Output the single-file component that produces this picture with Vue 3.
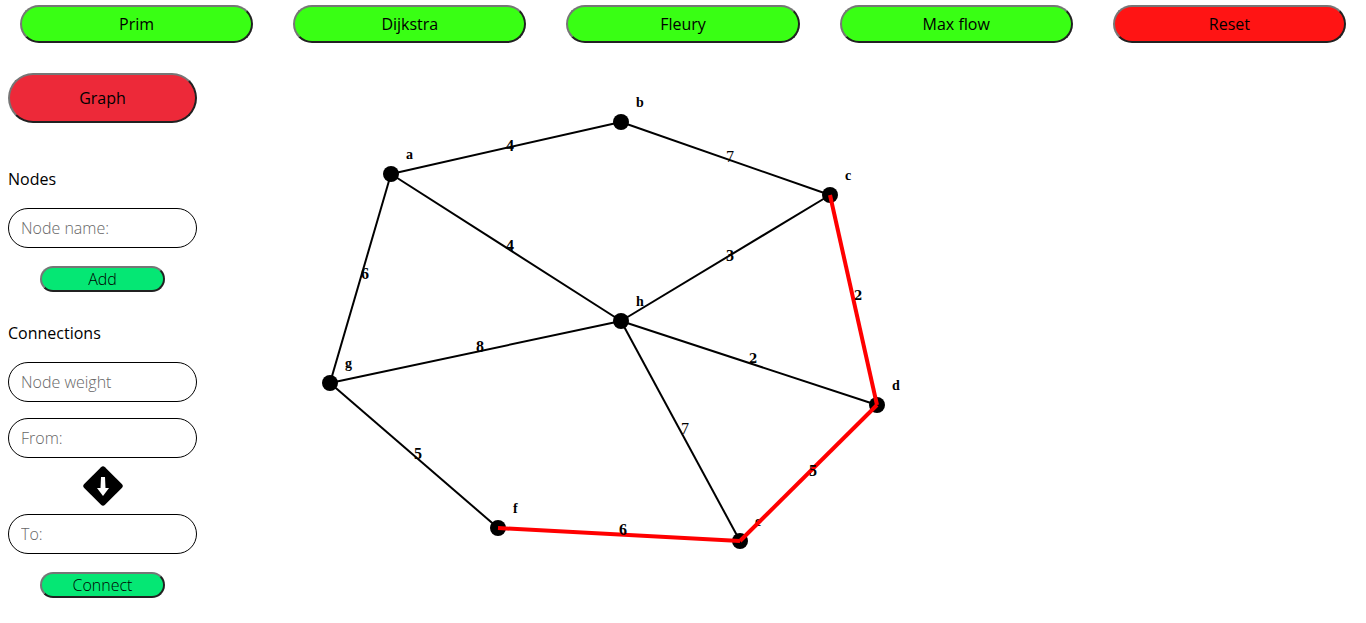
<script setup>
import { ref } from 'vue'

const algorithms = ['Prim', 'Dijkstra', 'Fleury', 'Max flow']
const nodeName = ref('')
const weight = ref('')
const from = ref('')
const to = ref('')

const nodes = {
  a: { x: 186, y: 131 },
  b: { x: 416, y: 79 },
  c: { x: 625, y: 152 },
  d: { x: 672, y: 362 },
  e: { x: 535, y: 498 },
  f: { x: 293, y: 485 },
  g: { x: 125, y: 340 },
  h: { x: 416, y: 278 },
}

const connect = ([start, end, value]) => {
  const p = nodes[start]
  const q = nodes[end]
  return {
    id: start + end,
    p,
    q,
    value,
    x: Math.round((p.x + q.x) / 2),
    y: Math.round((p.y + q.y) / 2) + ([3, 4, 5, 7].includes(value) ? 3 : 0),
  }
}

const edges = [
  ['a', 'b', 4], ['b', 'c', 7], ['a', 'h', 4], ['a', 'g', 6], ['c', 'h', 3],
  ['g', 'h', 8], ['h', 'd', 2], ['h', 'e', 7], ['g', 'f', 5],
].map(connect)

const route = [['c', 'd', 2], ['d', 'e', 5], ['e', 'f', 6]].map(connect)
</script>

<template>
  <div class="page">
    <nav class="toolbar">
      <button v-for="name in algorithms" :key="name" type="button">{{ name }}</button>
      <button type="button" class="reset">Reset</button>
    </nav>
    <main class="workspace">
      <aside class="sidebar">
        <button type="button" class="graph">Graph</button>
        <form class="group" @submit.prevent>
          <label class="heading" for="node-name">Nodes</label>
          <input id="node-name" v-model="nodeName" type="text" placeholder="Node name:">
          <button type="submit" class="submit">Add</button>
        </form>
        <form class="group" @submit.prevent>
          <label class="heading" for="weight">Connections</label>
          <input id="weight" v-model="weight" type="text" placeholder="Node weight">
          <input id="from" v-model="from" class="from" type="text" placeholder="From:" aria-label="From">
          <svg class="arrow" viewBox="0 0 40 40" aria-hidden="true">
            <path d="M18 1.2Q20-.8 22 1.2L38.8 18Q40.8 20 38.8 22L22 38.8Q20 40.8 18 38.8L1.2 22Q-.8 20 1.2 18Z" />
            <path class="arrow-mark" d="M18 11h4l.5 11H26L20 30l-6-8h3.500Z" />
          </svg>
          <input id="to" v-model="to" type="text" placeholder="To:" aria-label="To">
          <button type="submit" class="submit">Connect</button>
        </form>
      </aside>
      <svg class="board" role="img" aria-label="Weighted graph">
        <line v-for="e in edges" :key="e.id" class="edge" :x1="e.p.x" :y1="e.p.y" :x2="e.q.x" :y2="e.q.y" />
        <text v-for="e in edges" :key="e.id" class="weight" :class="{ low: e.value === 2, thin: e.value === 7 }" :x="e.x" :y="e.y">{{ e.value }}</text>
        <g v-for="(n, name) in nodes" :key="name">
          <circle :cx="n.x" :cy="n.y" r="8" />
          <text class="name" :x="n.x + 15" :y="n.y - 15">{{ name }}</text>
        </g>
        <line v-for="e in route" :key="e.id" class="edge route" :x1="e.p.x" :y1="e.p.y" :x2="e.q.x" :y2="e.q.y" />
        <text v-for="e in route" :key="e.id" class="weight" :class="{ low: e.value === 2 }" :x="e.x" :y="e.y">{{ e.value }}</text>
      </svg>
    </main>
  </div>
</template>

<style>
body {
  margin: 0;
  background: #fff;
}
</style>

<style scoped>
.page {
  font: 380 16px/22px "Open Sans", sans-serif;
  color: #000;
}
button,
input {
  box-sizing: border-box;
  margin: 0;
  font: inherit;
  color: #000;
}
button {
  padding: 0;
  border: 2px solid;
  border-color: #767676 #212121 #212121 #767676;
}
.toolbar {
  display: flex;
  gap: 40px;
  padding: 5px 20px 0;
}
.toolbar button {
  flex: 1;
  height: 38px;
  border-radius: 20px;
  background: #39ff14;
}
.toolbar .reset {
  background: #ff1414;
}
.workspace {
  display: flex;
}
.sidebar {
  display: flex;
  flex: none;
  flex-direction: column;
  width: 189px;
  padding: 30px 8px 0;
}
.graph {
  height: 50px;
  margin-bottom: 15px;
  border-radius: 25px;
  background: #ed2939;
}
.group {
  display: flex;
  flex-direction: column;
  margin-top: 30px;
}
.heading {
  margin-bottom: 18px;
}
input {
  width: 100%;
  height: 40px;
  padding: 0 12px;
  border: 1px solid #000;
  border-radius: 20px;
  background: #fff;
  font-weight: 300;
}
input::placeholder {
  color: #666;
  opacity: 1;
}
.from {
  margin-top: 16px;
}
.submit {
  align-self: center;
  width: 125px;
  height: 26px;
  margin-top: 18px;
  border-radius: 13px;
  background: #05e774;
  font-weight: 300;
}
.arrow {
  align-self: center;
  width: 40px;
  height: 40px;
  margin: 8px 0;
}
.arrow-mark {
  fill: #fff;
}
.board {
  flex: 1;
  min-width: 0;
  height: 560px;
}
.edge {
  stroke: #000;
  stroke-width: 2;
}
.route {
  stroke: #f00;
  stroke-width: 4;
}
.weight,
.name {
  font-family: "Liberation Serif", serif;
  font-weight: 700;
}
.weight {
  font-size: 16px;
}
.thin {
  font-weight: 400;
}
.low {
  font-family: "DejaVu Serif", serif;
  font-size: 12px;
}
.name {
  font-size: 14px;
}
</style>
